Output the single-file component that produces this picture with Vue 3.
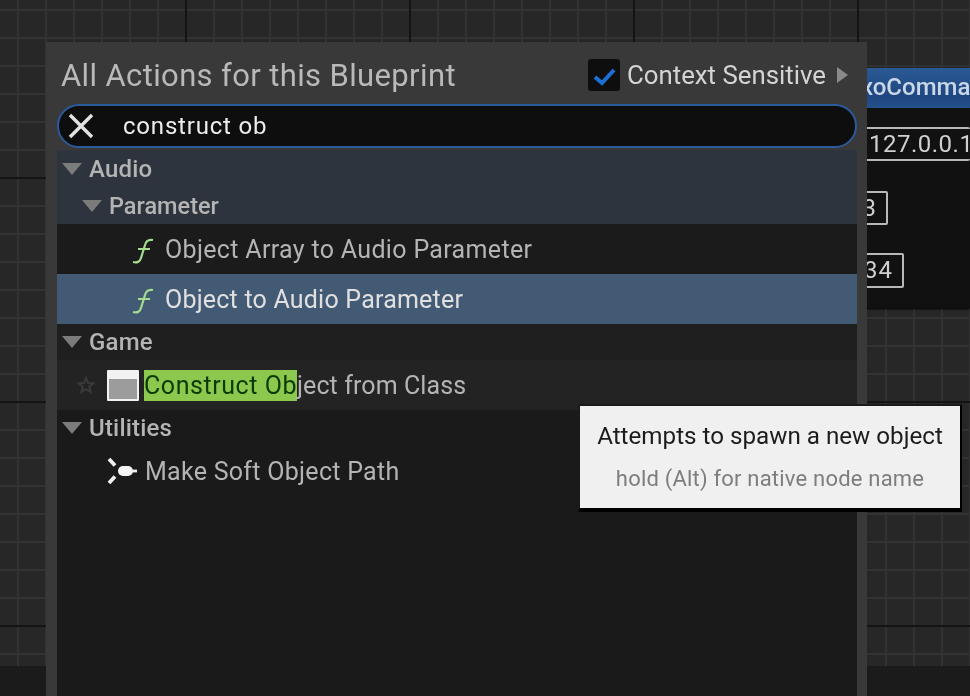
<script setup>
const nodeFields = [
  { text: '127.0.0.1', cls: 'ip' },
  { text: '3', cls: 'one' },
  { text: '34', cls: 'two' },
]
const fnPath = 'M22 6 C17 5 15 7 14 11 L10 24 C9 28 6 29 2 28 M7 15 H19'
</script>

<template>
  <div class="canvas">
    <div class="footer"></div>

    <div class="node">
      <div class="node-head">xoCommand</div>
      <div class="node-body">
        <div v-for="f in nodeFields" :key="f.text" class="field" :class="f.cls">{{ f.text }}</div>
      </div>
    </div>

    <div class="panel">
      <div class="top">
        <span class="title">All Actions for this Blueprint</span>
        <div class="ctx">
          <span class="check">
            <svg width="28" height="24" viewBox="0 0 28 24"><path d="M5 14 L12 20 L24 7" fill="none" stroke="#1d6fd6" stroke-width="4"/></svg>
          </span>
          <span class="ctx-label">Context Sensitive</span>
          <svg class="ctx-arrow" width="11" height="16" viewBox="0 0 11 16"><path d="M0 0 L11 8 L0 16 Z" fill="#8a8a8a"/></svg>
        </div>
      </div>

      <div class="search">
        <svg class="clear" width="26" height="26" viewBox="0 0 26 26"><path d="M2 2 L24 24 M24 2 L2 24" stroke="#e2e2e2" stroke-width="3.4"/></svg>
        <span class="query">construct ob</span>
      </div>

      <div class="list">
        <div class="cat tint">
          <div class="row-cat lv1"><span class="tri"></span>Audio</div>
          <div class="row-cat lv2"><span class="tri"></span>Parameter</div>
        </div>

        <div class="item">
          <svg class="fn" width="24" height="30" viewBox="0 0 24 30"><path :d="fnPath" fill="none" stroke="#a3dc8e" stroke-width="2.2"/></svg>
          <span>Object Array to Audio Parameter</span>
        </div>
        <div class="item selected">
          <svg class="fn" width="24" height="30" viewBox="0 0 24 30"><path :d="fnPath" fill="none" stroke="#a3dc8e" stroke-width="2.2"/></svg>
          <span>Object to Audio Parameter</span>
        </div>

        <div class="row-cat lv1 game"><span class="tri"></span>Game</div>

        <div class="item leaf hovered">
          <svg class="star" width="18" height="18" viewBox="0 0 18 18"><path d="M9 2 L11 7 L16.5 7.3 L12.3 10.8 L13.7 16 L9 13.2 L4.3 16 L5.7 10.8 L1.5 7.3 L7 7 Z" fill="none" stroke="#3a3a3a" stroke-width="2"/></svg>
          <span class="cls-icon"><span class="cls-fill"></span></span>
          <span class="label rest"><span class="hit">Construct Ob</span>ject from Class</span>
        </div>

        <div class="row-cat lv1 util"><span class="tri"></span>Utilities</div>

        <div class="item leaf path-row">
          <svg class="path-icon" width="30" height="30" viewBox="0 0 30 30"><path d="M2 3 L8 9.5 M2 27 L8 20.5" stroke="#f0f0f0" stroke-width="3.8" fill="none"/><rect x="11" y="10" width="15" height="10" rx="5" fill="#f4f4f4"/><path d="M25 15 H30" stroke="#f0f0f0" stroke-width="2.8"/></svg>
          <span class="label soft">Make Soft Object Path</span>
        </div>
      </div>
    </div>

    <div class="tooltip">
      <div class="tip-main">Attempts to spawn a new object</div>
      <div class="tip-sub">hold (Alt) for native node name</div>
    </div>
  </div>
</template>

<style>
html, body { margin: 0; background: #262626; }
</style>

<style scoped>
.canvas {
  position: relative;
  width: 970px;
  height: 696px;
  overflow: hidden;
  font-family: Roboto, "Liberation Sans", sans-serif;
  background-color: #272727;
  background-repeat: repeat;
  background-size: 224px 224px, 224px 224px, 28px 28px, 28px 28px;
  background-image:
    linear-gradient(#141414 2px, transparent 2px),
    linear-gradient(90deg, #141414 2px, transparent 2px),
    linear-gradient(#323232 2px, transparent 2px),
    linear-gradient(90deg, #323232 2px, transparent 2px);
  background-position: 0 -47px, -39px 0, 0 9px, 17px 0;
  filter: blur(0.35px);
}
.footer {
  position: absolute;
  left: 0; right: 0; bottom: 0;
  height: 30px;
  background: #1b1b1b;
}

.node {
  position: absolute;
  left: 850px; top: 68px;
  width: 120px; height: 240px;
  overflow: hidden;
  background: #111;
  box-shadow: 0 1px 2px #000;
}
.node-head {
  height: 40px;
  box-sizing: border-box;
  padding: 3px 0 0 11px;
  background: linear-gradient(#2a5a95, #1f4680 70%, #24508c);
  color: #c9d7e8;
  font-size: 24px;
  font-weight: 500;
  line-height: 32px;
  white-space: nowrap;
}
.node-body { position: relative; }
.field {
  position: absolute;
  box-sizing: border-box;
  border: 2px solid #b8b8b8;
  border-radius: 2px;
  color: #d0d0d0;
  font-size: 24px;
  line-height: 30px;
  letter-spacing: 1px;
  white-space: nowrap;
  text-align: right;
}
.ip { top: 19px; left: 0; width: 120px; height: 34px; border-right: 0; text-align: left; padding-left: 17px; letter-spacing: 0.5px; }
.one { top: 83px; left: 0; width: 38px; height: 34px; padding-right: 9px; }
.two { top: 145px; left: 0; width: 54px; height: 35px; padding-right: 9px; }

.panel {
  position: absolute;
  left: 46px; top: 42px;
  width: 821px; height: 654px;
  box-sizing: border-box;
  padding: 0 10px 0 11px;
  background: #393939;
  display: flex;
  flex-direction: column;
}
.top {
  height: 62px;
  display: flex;
  align-items: center;
  justify-content: space-between;
  padding: 4px 9px 0 4px;
  box-sizing: border-box;
}
.title {
  font-size: 31px;
  color: #b9b9b9;
  letter-spacing: 0.37px;
  white-space: nowrap;
}
.ctx { display: flex; align-items: center; }
.check {
  width: 32px; height: 32px;
  border-radius: 3px;
  background: #0e0e0e;
  display: flex; align-items: center; justify-content: center;
}
.ctx-label {
  margin-left: 7px;
  font-size: 25.8px;
  color: #d4d4d4;
  white-space: nowrap;
}
.ctx-arrow { margin-left: 11px; }

.search {
  height: 44px;
  box-sizing: border-box;
  border: 2px solid #2a5b9c;
  border-radius: 22px;
  background: #0e0e0e;
  display: flex;
  align-items: center;
  padding-left: 9px;
  flex-shrink: 0;
}
.query {
  margin-left: 29px;
  font-size: 24px;
  color: #ececec;
  letter-spacing: 0.8px;
  white-space: nowrap;
}

.list {
  margin-top: 2px;
  flex: 1;
  background: #1a1a1a;
  color: #bdbdbd;
}
.tint { background: #2d343e; }
.row-cat {
  height: 36px;
  box-sizing: border-box;
  display: flex;
  align-items: center;
  font-size: 24px;
  font-weight: 500;
  letter-spacing: 0.2px;
  color: #b4b4b4;
  padding-left: 5px;
}
.lv1 { height: 38px; }
.lv2 { padding-left: 25px; height: 36px; font-size: 23.5px; letter-spacing: 0; }
.game { height: 36px; background: #1f1f1f; }
.util { padding-bottom: 2px; }
.tri {
  width: 0; height: 0;
  border-left: 10px solid transparent;
  border-right: 10px solid transparent;
  border-top: 12px solid #7b7b7b;
  margin-right: 7px;
}
.item {
  height: 50px;
  display: flex;
  align-items: center;
  padding-left: 74px;
  background: #1b1b1b;
  font-size: 25px;
  letter-spacing: 0.33px;
  color: #b4b4b4;
  white-space: nowrap;
}
.fn { margin-right: 10px; }
.selected { background: #435a74; color: #e0e0e0; letter-spacing: 0.21px; }
.hovered { background: #232323; }
.leaf { padding-left: 0; position: relative; }
.star { margin-left: 20px; }
.cls-icon {
  margin-left: 12px;
  width: 32px; height: 31px;
  box-sizing: border-box;
  border: 2px solid #f2f2f2;
  border-top-width: 9px;
  border-radius: 1px;
  background: #9c9c9c;
}
.label { margin-left: 5px; }
.rest { letter-spacing: 0.1px; }
.soft { letter-spacing: 0.28px; }
.hit { background: #8cc84e; color: #0c3a05; display: inline-block; line-height: 31px; letter-spacing: 0.55px; }
.path-row { height: 36px; padding-left: 50px; margin-top: 5px; background: none; }
.path-icon { margin-right: 3px; }

.tooltip {
  position: absolute;
  left: 578px; top: 404px;
  width: 384px; height: 108px;
  box-sizing: border-box;
  border: 2px solid #1a1a1a;
  border-right-color: #000;
  border-bottom: 4px solid #000;
  background: #f0f0f0;
  text-align: center;
  white-space: nowrap;
}
.tip-main {
  font-size: 24.2px;
  color: #1c1c1c;
  margin-top: 14px;
  line-height: 32px;
}
.tip-sub {
  font-size: 22px;
  color: #7d7d7d;
  margin-top: 12px;
  line-height: 30px;
  letter-spacing: 0.2px;
}
</style>
